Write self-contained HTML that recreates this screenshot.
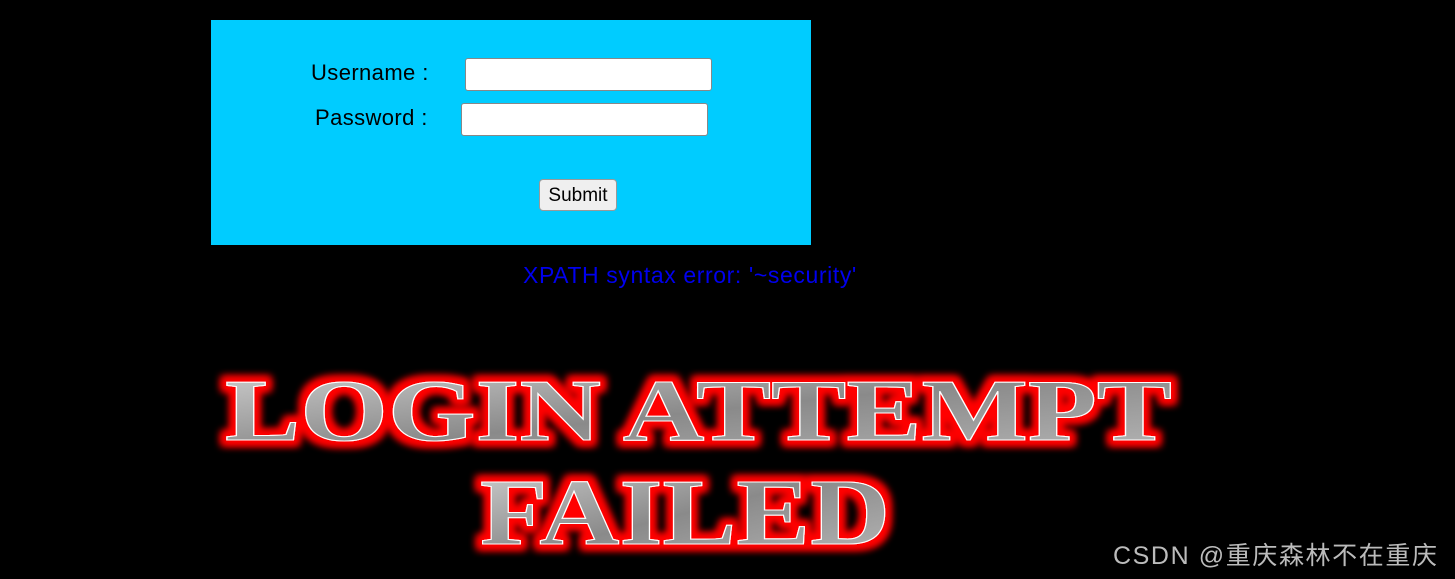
<!DOCTYPE html>
<html><head><meta charset="utf-8"><style>
html,body{margin:0;padding:0;background:#000;width:1455px;height:579px;overflow:hidden;font-family:"Liberation Sans",sans-serif}
.box{position:absolute;left:211px;top:20px;width:600px;height:225px;background:#00ccff}
.lbl{position:absolute;font-size:22px;color:#000;letter-spacing:0.4px}
.inp{position:absolute;height:33px;background:#fff;border:1px solid #888;border-radius:3px;box-sizing:border-box}
.btn{position:absolute;left:539px;top:179px;width:78px;height:32px;background:#efefef;border:1px solid #999;border-radius:4px;box-sizing:border-box;font-size:19px;text-align:center;line-height:32px;color:#000}
.err{position:absolute;left:523px;top:262px;font-size:23px;color:#0000ee;letter-spacing:0.6px}
.csdn{position:absolute;left:1113px;top:536px;font-size:25px;color:#bbb;letter-spacing:1.6px;font-family:"Liberation Sans","Noto Sans CJK SC",sans-serif}
</style></head><body>
<div class="box"></div>
<div class="lbl" style="left:311px;top:60px">Username :</div>
<div class="inp" style="left:465px;top:58px;width:247px"></div>
<div class="lbl" style="left:315px;top:105px">Password :</div>
<div class="inp" style="left:461px;top:103px;width:247px"></div>
<div class="btn">Submit</div>
<div class="err">XPATH syntax error: '~security'</div>
<svg style="position:absolute;left:0;top:0" width="1455" height="579">
<defs>
<linearGradient id="g" x1="0" y1="0" x2="1" y2="1">
<stop offset="0" stop-color="#d0d0d0"/><stop offset="0.5" stop-color="#8a8a8a"/><stop offset="1" stop-color="#b8b8b8"/>
</linearGradient>
<filter id="glow" x="-10%" y="-30%" width="120%" height="160%">
<feMorphology in="SourceAlpha" operator="dilate" radius="5" result="d"/>
<feGaussianBlur in="d" stdDeviation="4" result="b"/>
<feFlood flood-color="#ff0000"/>
<feComposite in2="b" operator="in" result="r"/>
<feMerge><feMergeNode in="r"/><feMergeNode in="r"/><feMergeNode in="SourceGraphic"/></feMerge>
</filter>
</defs>
<g filter="url(#glow)" font-family="Liberation Serif,serif" font-weight="bold" fill="url(#g)" stroke="#fff" stroke-width="1">
<text x="225" y="440" font-size="88" textLength="947" lengthAdjust="spacingAndGlyphs">LOGIN ATTEMPT</text>
<text x="480" y="544" font-size="94" textLength="410" lengthAdjust="spacingAndGlyphs">FAILED</text>
</g>
</svg>
<div class="csdn">CSDN @重庆森林不在重庆</div>
</body></html>
